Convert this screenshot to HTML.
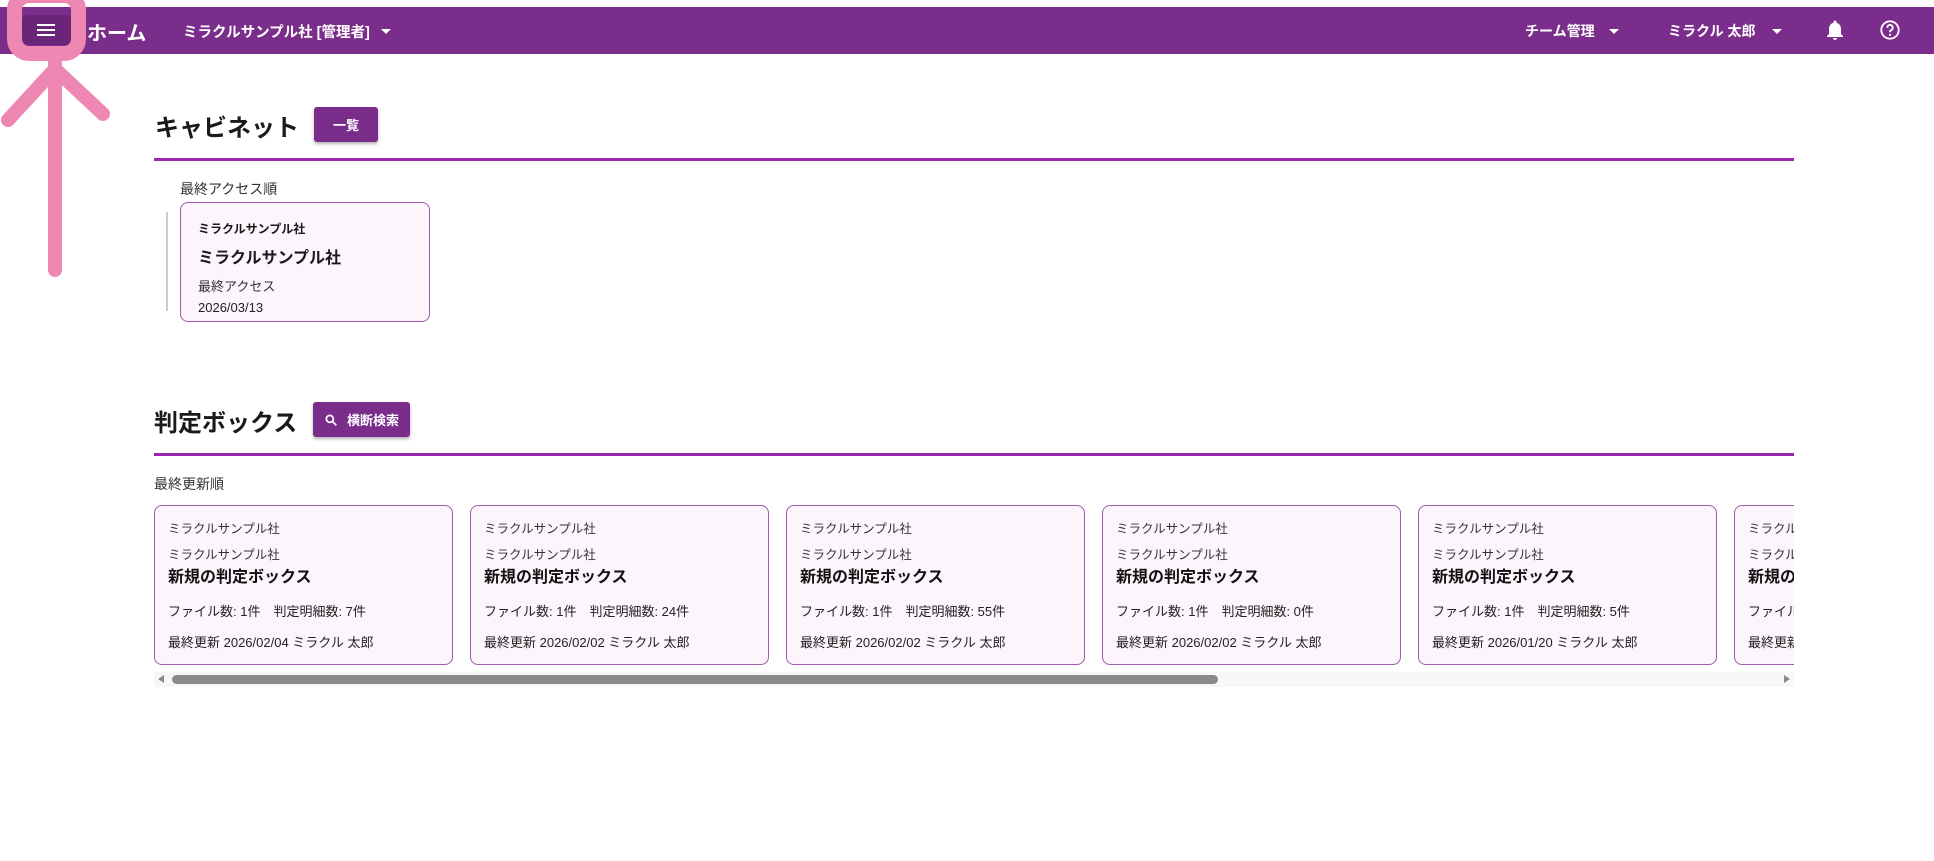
<!DOCTYPE html>
<html><head><meta charset="utf-8"><style>
*{margin:0;padding:0;box-sizing:border-box}
body{width:1934px;height:861px;background:#fff;position:relative;overflow:hidden;font-family:"Liberation Sans","Noto Sans CJK JP",sans-serif;color:#1a1a1a}
.abs{position:absolute;white-space:nowrap}
.hdr{position:absolute;left:0;top:7px;width:1934px;height:47px;background:#7b2d8b}
.w{color:#fff;font-weight:bold}
.caret{position:absolute;width:0;height:0;border-left:5px solid transparent;border-right:5px solid transparent;border-top:5px solid #fff}
.btn{position:absolute;background:#7b2d8b;color:#fff;font-weight:bold;font-size:13px;border-radius:3px;box-shadow:0 2px 3px rgba(0,0,0,.3);display:flex;align-items:center;justify-content:center}
.line{position:absolute;left:154px;width:1640px;height:3px;background:#9c27b0}
.card{position:absolute;background:#fcf5fc;border:1.5px solid #a05aae;border-radius:8px;overflow:hidden}
.card div{position:absolute;left:13px;white-space:nowrap}
.c1{font-size:12.5px;color:#333}
.t{font-size:16px;font-weight:bold;color:#111}
.s{font-size:13px;color:#222}
</style></head><body>
<div class="hdr"></div>
<div class="abs" style="left:22px;top:15px;width:50px;height:30px;background:#6a2479;border-radius:6px"></div>
<div class="abs" style="left:37px;top:24px;width:18px;height:2px;background:#fff;box-shadow:0 5px 0 #fff,0 10px 0 #fff"></div>
<div class="abs" style="left:7px;top:-12px;width:79px;height:73px;border:15px solid #ee88b3;border-radius:22px"></div>
<svg class="abs" style="left:0;top:55px" width="120" height="225"><path d="M55 8 V215 M8 65 L55 14 L103 59" fill="none" stroke="#ee88b3" stroke-width="14" stroke-linecap="round" stroke-linejoin="round"/></svg>
<div class="abs w" style="left:87px;top:17px;font-size:20px">ホーム</div>
<div class="abs w" style="left:183px;top:21px;font-size:14.5px">ミラクルサンプル社 [管理者]</div>
<div class="caret" style="left:381px;top:29px"></div>
<div class="abs w" style="left:1525px;top:21px;font-size:14px">チーム管理</div>
<div class="caret" style="left:1609px;top:29px"></div>
<div class="abs w" style="left:1668px;top:21px;font-size:14px">ミラクル 太郎</div>
<div class="caret" style="left:1772px;top:29px"></div>
<svg class="abs" style="left:1823px;top:18px" width="24" height="24" viewBox="0 0 24 24"><path fill="#fff" d="M12 22c1.1 0 2-.9 2-2h-4c0 1.1.9 2 2 2zm6-6v-5c0-3.1-1.6-5.6-4.5-6.3V4c0-.8-.7-1.5-1.5-1.5s-1.5.7-1.5 1.5v.7C7.6 5.4 6 7.9 6 11v5l-2 2v1h16v-1l-2-2z"/></svg>
<svg class="abs" style="left:1879px;top:19px" width="22" height="22" viewBox="0 0 24 24"><circle cx="12" cy="12" r="9.5" fill="none" stroke="#fff" stroke-width="2"/><path d="M9 9.5a3 3 0 1 1 4.2 2.7c-.8.4-1.2 1-1.2 1.8v.5" fill="none" stroke="#fff" stroke-width="2"/><circle cx="12" cy="17.3" r="1.2" fill="#fff"/></svg>

<div class="abs" style="left:155px;top:108px;font-size:24px;font-weight:bold">キャビネット</div>
<div class="btn" style="left:314px;top:107px;width:64px;height:35px">一覧</div>
<div class="line" style="top:158px"></div>
<div class="abs" style="left:180px;top:179px;font-size:14px;color:#333">最終アクセス順</div>
<div class="abs" style="left:166px;top:212px;width:2px;height:99px;background:#ccc"></div>
<div class="card" style="left:180px;top:202px;width:250px;height:120px">
<div style="left:17px;top:17px;font-size:12px;font-weight:bold">ミラクルサンプル社</div>
<div style="left:17px;top:41px;font-size:16px;font-weight:bold">ミラクルサンプル社</div>
<div style="left:17px;top:73px;font-size:13px;color:#333">最終アクセス</div>
<div style="left:17px;top:97px;font-size:13px;color:#222">2026/03/13</div>
</div>

<div class="abs" style="left:154px;top:403px;font-size:24px;font-weight:bold">判定ボックス</div>
<div class="btn" style="left:313px;top:402px;width:97px;height:35px"><svg width="14" height="14" viewBox="0 0 24 24" style="margin-right:9px"><circle cx="10" cy="10" r="6" fill="none" stroke="#fff" stroke-width="3"/><path d="M14.5 14.5L21 21" stroke="#fff" stroke-width="3"/></svg>横断検索</div>
<div class="line" style="top:453px"></div>
<div class="abs" style="left:154px;top:474px;font-size:14px;color:#333">最終更新順</div>

<div class="abs" style="left:154px;top:505px;width:1640px;height:162px;overflow:hidden">
<div class="card" style="left:0;top:0;width:299px;height:160px"><div class="c1" style="top:12px">ミラクルサンプル社</div><div class="c1" style="top:38px">ミラクルサンプル社</div><div class="t" style="top:57px">新規の判定ボックス</div><div class="s" style="top:95px">ファイル数: 1件　判定明細数: 7件</div><div class="s" style="top:126px">最終更新 2026/02/04 ミラクル 太郎</div></div>
<div class="card" style="left:316px;top:0;width:299px;height:160px"><div class="c1" style="top:12px">ミラクルサンプル社</div><div class="c1" style="top:38px">ミラクルサンプル社</div><div class="t" style="top:57px">新規の判定ボックス</div><div class="s" style="top:95px">ファイル数: 1件　判定明細数: 24件</div><div class="s" style="top:126px">最終更新 2026/02/02 ミラクル 太郎</div></div>
<div class="card" style="left:632px;top:0;width:299px;height:160px"><div class="c1" style="top:12px">ミラクルサンプル社</div><div class="c1" style="top:38px">ミラクルサンプル社</div><div class="t" style="top:57px">新規の判定ボックス</div><div class="s" style="top:95px">ファイル数: 1件　判定明細数: 55件</div><div class="s" style="top:126px">最終更新 2026/02/02 ミラクル 太郎</div></div>
<div class="card" style="left:948px;top:0;width:299px;height:160px"><div class="c1" style="top:12px">ミラクルサンプル社</div><div class="c1" style="top:38px">ミラクルサンプル社</div><div class="t" style="top:57px">新規の判定ボックス</div><div class="s" style="top:95px">ファイル数: 1件　判定明細数: 0件</div><div class="s" style="top:126px">最終更新 2026/02/02 ミラクル 太郎</div></div>
<div class="card" style="left:1264px;top:0;width:299px;height:160px"><div class="c1" style="top:12px">ミラクルサンプル社</div><div class="c1" style="top:38px">ミラクルサンプル社</div><div class="t" style="top:57px">新規の判定ボックス</div><div class="s" style="top:95px">ファイル数: 1件　判定明細数: 5件</div><div class="s" style="top:126px">最終更新 2026/01/20 ミラクル 太郎</div></div>
<div class="card" style="left:1580px;top:0;width:299px;height:160px"><div class="c1" style="top:12px">ミラクルサンプル社</div><div class="c1" style="top:38px">ミラクルサンプル社</div><div class="t" style="top:57px">新規の判定ボックス</div><div class="s" style="top:95px">ファイル数: 1件　判定明細数: 5件</div><div class="s" style="top:126px">最終更新 2026/01/20 ミラクル 太郎</div></div>
</div>
<div class="abs" style="left:154px;top:672px;width:1640px;height:15px;background:#f7f7f7"></div>
<div class="abs" style="left:172px;top:675px;width:1046px;height:9px;background:#8a8a8a;border-radius:5px"></div>
<div class="abs" style="left:158px;top:675px;width:0;height:0;border-top:4.5px solid transparent;border-bottom:4.5px solid transparent;border-right:6px solid #888"></div>
<div class="abs" style="left:1784px;top:675px;width:0;height:0;border-top:4.5px solid transparent;border-bottom:4.5px solid transparent;border-left:6px solid #888"></div>
</body></html>
